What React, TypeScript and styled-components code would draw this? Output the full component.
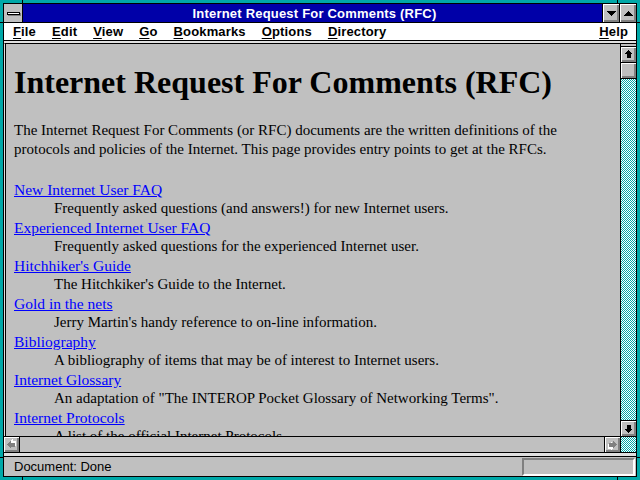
import styled, { createGlobalStyle } from "styled-components";

const Global = createGlobalStyle`
  html, body { margin: 0; padding: 0; background: #00a8a8; }
  * { box-sizing: border-box; }
`;

const TEAL = "#00a8a8";
const GRAY = "#c0c0c0";
const DARK = "#808080";

const Frame = styled.div`
  width: 640px;
  height: 480px;
  background:
    linear-gradient(#000, #000) 22px 0 / 1px 100% no-repeat,
    linear-gradient(#000, #000) 617px 0 / 1px 100% no-repeat,
    linear-gradient(#000, #000) 0 22px / 100% 1px no-repeat,
    linear-gradient(#000, #000) 0 457px / 100% 1px no-repeat,
    ${TEAL};
  padding: 3px;
  display: flex;
`;

const Inner = styled.div`
  flex: 1;
  min-height: 0;
  border: 1px solid #000;
  background: ${GRAY};
  display: flex;
  flex-direction: column;
  font-family: "Liberation Sans", Arial, sans-serif;
`;

const TitleBar = styled.div`
  height: 19px;
  display: flex;
  border-bottom: 1px solid #000;
  background: #0000a8;
`;

const SysBox = styled.div`
  width: 19px;
  background: ${GRAY};
  border-right: 1px solid #000;
  display: flex;
  align-items: center;
  justify-content: center;
`;

const SysBar = styled.div`
  width: 13px;
  height: 3px;
  background: #fff;
  border: 1px solid #000;
  box-shadow: 1px 1px 0 ${DARK};
`;

const Title = styled.div`
  flex: 1;
  color: #fff;
  font-weight: bold;
  font-size: 13px;
  letter-spacing: 0.2px;
  display: flex;
  align-items: center;
  justify-content: center;
  padding-left: 4px;
`;

const TitleBtn = styled.div`
  width: 17px;
  background: ${GRAY};
  border-left: 1px solid #000;
  box-shadow: inset 1px 1px 0 #fff, inset -1px -1px 0 ${DARK}, inset -2px -2px 0 ${DARK};
  display: flex;
  align-items: center;
  justify-content: center;
`;

const MenuBar = styled.div`
  height: 18px;
  background: #fff;
  border-bottom: 1px solid #000;
  display: flex;
  align-items: center;
  padding-left: 1px;
  font-weight: bold;
  font-size: 13px;
  letter-spacing: 0.15px;
  color: #000;
`;

const MenuItem = styled.span<{ $right?: boolean }>`
  padding: 0 8px;
  margin-left: ${({ $right }) => ($right ? "auto" : "0")};
  u { text-decoration: underline; text-underline-offset: 2px; }
`;

const Viewport = styled.div`
  flex: 1;
  min-height: 0;
  display: flex;
  flex-direction: column;
  border-top: 2px solid #e0e0e0;
`;

const ScrollRow = styled.div`
  flex: 1;
  min-height: 0;
  display: flex;
  border-top: 1px solid #000;
  border-left: 1px solid #e0e0e0;
`;

const Page = styled.div`
  flex: 1;
  min-width: 0;
  overflow: hidden;
  border-left: 1px solid #000;
  padding: 0 0 0 8px;
  font-family: "Liberation Serif", "Times New Roman", serif;
  font-size: 15px;
  line-height: 19px;
  color: #000;
`;

const Heading = styled.h1`
  margin: 20px 0 0;
  font-family: "Liberation Serif", "Times New Roman", serif;
  font-size: 32px;
  line-height: 36px;
  font-weight: bold;
`;

const Para = styled.p`
  margin: 21px 0 0;
  width: 600px;
`;

const List = styled.dl`
  margin: 21px 0 0;
`;

const Term = styled.dt`
  font-size: 15.5px;
  a { color: #0000ff; text-decoration: underline; }
`;

const Desc = styled.dd`
  margin: 0 0 0 40px;
  white-space: nowrap;
`;

const VScroll = styled.div`
  width: 16px;
  border-left: 1px solid #000;
  padding-top: 2px;
  display: flex;
  flex-direction: column;
`;

const ArrowBtn = styled.div<{ $edge: "top" | "bottom" | "left" | "right" }>`
  width: 15px;
  height: 15px;
  flex: none;
  background: ${GRAY};
  box-shadow: inset 1px 1px 0 #fff, inset -1px -1px 0 ${DARK}, inset -2px -2px 0 ${DARK};
  ${({ $edge }) => `border-${$edge === "top" ? "bottom" : $edge === "bottom" ? "top" : $edge === "left" ? "right" : "left"}: 1px solid #000;`}
  ${({ $edge }) => ($edge === "top" ? "height: 17px; border-top: 1px solid #000;" : $edge === "bottom" ? "height: 16px;" : "width: 16px;")}
  display: flex;
  align-items: center;
  justify-content: center;
`;

const Thumb = styled.div`
  height: 16px;
  flex: none;
  background: ${GRAY};
  border-bottom: 1px solid #000;
  box-shadow: inset 1px 1px 0 #fff, inset -1px -1px 0 ${DARK}, inset -2px -2px 0 ${DARK};
`;

const Dither = styled.div`
  flex: 1;
  background-color: ${TEAL};
  background-image: repeating-conic-gradient(#fff 0 25%, transparent 0 50%);
  background-size: 2px 2px;
`;

const HScroll = styled.div`
  height: 17px;
  display: flex;
  border-top: 1px solid #000;
  border-bottom: 1px solid #000;
`;

const HTrack = styled.div`
  flex: 1;
  background: ${GRAY};
`;

const Corner = styled(Dither)`
  flex: none;
  width: 16px;
  border-left: 1px solid #000;
`;

const StatusBar = styled.div`
  height: 23px;
  border-top: 3px solid #e0e0e0;
  display: flex;
`;

const StatusInner = styled.div`
  flex: 1;
  border-top: 1px solid #000;
  display: flex;
  align-items: center;
  justify-content: space-between;
  padding: 0 1px 0 10px;
  font-size: 13px;
  color: #000;
`;

const Progress = styled.div`
  width: 113px;
  height: 18px;
  border-top: 2px solid ${DARK};
  border-left: 2px solid ${DARK};
  border-bottom: 2px solid #fff;
  border-right: 2px solid #fff;
  align-self: flex-end;
`;

type Dir = "up" | "down" | "left" | "right";

const rot: Record<Dir, number> = { up: 0, right: 90, down: 180, left: 270 };

const ScrollArrow = ({ dir, disabled }: { dir: Dir; disabled?: boolean }) => (
  <svg width="11" height="11" viewBox="0 0 11 11" shapeRendering="crispEdges">
    <g transform={`rotate(${rot[dir]} 5.5 5.5)`}>
      {disabled && <path d="M6.5 2 L10.5 6 L8.5 6 L8.5 9 L3.5 9 L3.5 6 L1.5 6 Z" fill="#fff" transform="translate(1 1)" />}
      <path d="M5.5 1 L9.5 5 L7.5 5 L7.5 9 L3.5 9 L3.5 5 L1.5 5 Z" fill={disabled ? DARK : "#000"} />
    </g>
  </svg>
);

const Tri = ({ up }: { up?: boolean }) => (
  <svg width="9" height="5" viewBox="0 0 9 5" shapeRendering="crispEdges">
    <path d={up ? "M4.5 0 L9 5 L0 5 Z" : "M0 0 L9 0 L4.5 5 Z"} fill="#000" />
  </svg>
);

const links: [string, string][] = [
  ["New Internet User FAQ", "Frequently asked questions (and answers!) for new Internet users."],
  ["Experienced Internet User FAQ", "Frequently asked questions for the experienced Internet user."],
  ["Hitchhiker's Guide", "The Hitchkiker's Guide to the Internet."],
  ["Gold in the nets", "Jerry Martin's handy reference to on-line information."],
  ["Bibliography", "A bibliography of items that may be of interest to Internet users."],
  ["Internet Glossary", "An adaptation of \"The INTEROP Pocket Glossary of Networking Terms\"."],
  ["Internet Protocols", "A list of the official Internet Protocols."],
];

const menus = ["File", "Edit", "View", "Go", "Bookmarks", "Options", "Directory"];

export default function App() {
  return (
    <Frame>
      <Global />
      <Inner>
        <TitleBar>
          <SysBox>
            <SysBar />
          </SysBox>
          <Title>Internet Request For Comments (RFC)</Title>
          <TitleBtn>
            <Tri />
          </TitleBtn>
          <TitleBtn>
            <Tri up />
          </TitleBtn>
        </TitleBar>
        <MenuBar>
          {menus.map((m) => (
            <MenuItem key={m}>
              <u>{m[0]}</u>
              {m.slice(1)}
            </MenuItem>
          ))}
          <MenuItem $right>
            <u>H</u>elp
          </MenuItem>
        </MenuBar>
        <Viewport>
          <ScrollRow>
            <Page>
              <Heading>Internet Request For Comments (RFC)</Heading>
              <Para>
                The Internet Request For Comments (or RFC) documents are the written definitions of the
                protocols and policies of the Internet. This page provides entry points to get at the RFCs.
              </Para>
              <List>
                {links.map(([t, d]) => (
                  <div key={t}>
                    <Term>
                      <a href="#">{t}</a>
                    </Term>
                    <Desc>{d}</Desc>
                  </div>
                ))}
              </List>
            </Page>
            <VScroll>
              <ArrowBtn $edge="top">
                <ScrollArrow dir="up" />
              </ArrowBtn>
              <Thumb />
              <Dither />
              <ArrowBtn $edge="bottom">
                <ScrollArrow dir="down" />
              </ArrowBtn>
            </VScroll>
          </ScrollRow>
          <HScroll>
            <ArrowBtn $edge="left">
              <ScrollArrow dir="left" disabled />
            </ArrowBtn>
            <HTrack />
            <ArrowBtn $edge="right">
              <ScrollArrow dir="right" disabled />
            </ArrowBtn>
            <Corner />
          </HScroll>
        </Viewport>
        <StatusBar>
          <StatusInner>
            Document: Done
            <Progress />
          </StatusInner>
        </StatusBar>
      </Inner>
    </Frame>
  );
}
